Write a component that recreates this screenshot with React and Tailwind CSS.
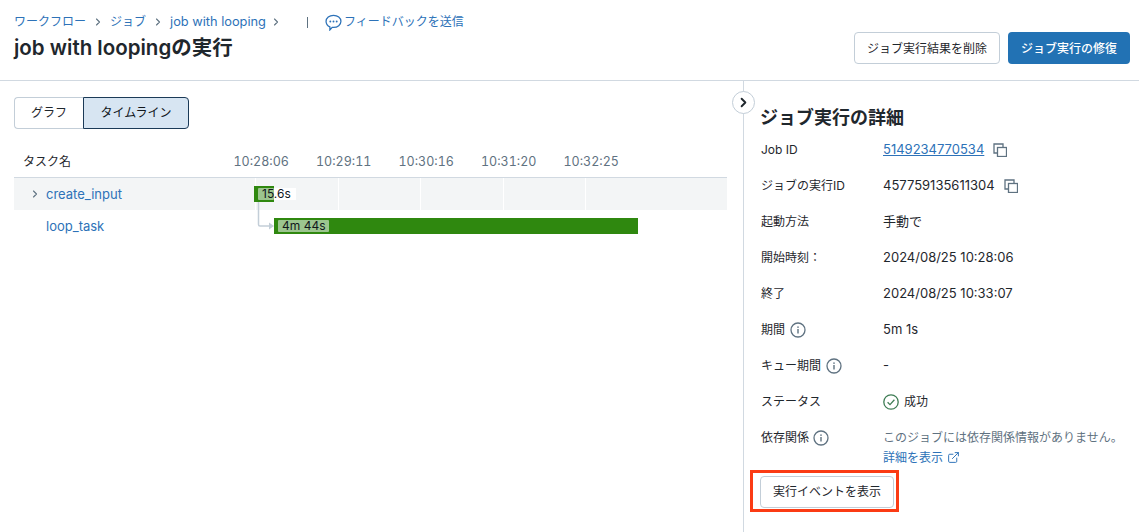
import { ChevronRight, ExternalLink } from 'lucide-react';

const FONT = "font-['Inter','Noto_Sans_CJK_JP',sans-serif]";
const TICKS = ['10:28:06', '10:29:11', '10:30:16', '10:31:20', '10:32:25'];

function CopyIcon() {
  return (
    <svg width="14" height="14" viewBox="0 0 14 14" fill="none" stroke="#5f7281" strokeWidth="1.3" className="shrink-0">
      <path d="M4 10H1V1h9v3" />
      <rect x="4.5" y="4.5" width="9" height="9" />
    </svg>
  );
}

function InfoIcon() {
  return (
    <svg width="16" height="16" viewBox="0 0 16 16" fill="none" className="shrink-0">
      <circle cx="8" cy="8" r="7" stroke="#5f7281" strokeWidth="1.3" />
      <rect x="7.3" y="7" width="1.4" height="4.5" fill="#5f7281" />
      <rect x="7.3" y="4.4" width="1.4" height="1.5" fill="#5f7281" />
    </svg>
  );
}

function SuccessIcon() {
  return (
    <svg width="16" height="16" viewBox="0 0 16 16" fill="none" className="shrink-0">
      <circle cx="8" cy="8" r="7.2" stroke="#3f7d55" strokeWidth="1.3" />
      <path d="M4.6 8.2l2.4 2.4 4.400-4.800" stroke="#3f7d55" strokeWidth="1.3" />
    </svg>
  );
}

function FeedbackIcon() {
  return (
    <svg width="17" height="17" viewBox="0 0 16 16" fill="none" className="shrink-0">
      <path d="M8 1.2c3.900 0 7 2.400 7 5.700s-3.100 5.700-7 5.700H6.800L4.600 15v-2.900C2.400 11.300 1 9.400 1 6.900 1 3.600 4.100 1.200 8 1.200z" stroke="#2d72b8" strokeWidth="1.200" />
      <circle cx="5" cy="7" r="0.9" fill="#2d72b8" />
      <circle cx="8" cy="7" r="0.9" fill="#2d72b8" />
      <circle cx="11" cy="7" r="0.9" fill="#2d72b8" />
    </svg>
  );
}

function DetailRow({ label, info, className, children }) {
  return (
    <div className={`flex items-center ${className}`}>
      <div className="w-[122px] shrink-0 flex items-center gap-[5px] text-[12px] text-[#1f272d]">
        {label}
        {info && <InfoIcon />}
      </div>
      <div className="flex items-center text-[13px] text-[#1f272d]">{children}</div>
    </div>
  );
}

function TimeGrid() {
  return (
    <div className="absolute inset-y-0 left-[241px] flex">
      {[0, 1, 2, 3, 4].map(i => (
        <div key={i} className="w-[82.500px] border-l border-white" />
      ))}
    </div>
  );
}

export default function App() {
  return (
    <div className={`${FONT} w-[1139px] h-[532px] overflow-hidden bg-white text-[#1f272d]`}>
      <header className="h-[81px] border-b border-[#d1d9e1] pl-[14px] pr-[9px] flex justify-between">
        <div>
          <div className="mt-[14px] h-[16px] flex items-center text-[12px] text-[#2d72b8]">
            <span>ワークフロー</span>
            <ChevronRight size={12} strokeWidth={2.200} className="text-[#5f7281] mx-[6px]" />
            <span>ジョブ</span>
            <ChevronRight size={12} strokeWidth={2.200} className="text-[#5f7281] mx-[6px]" />
            <span className="text-[12.800px]">job with looping</span>
            <ChevronRight size={12} strokeWidth={2.200} className="text-[#5f7281] mx-[4px]" />
            <span className="ml-[21px] mr-[17px] w-px h-[11px] bg-[#5f7281]" />
            <FeedbackIcon />
            <span className="ml-[2px]">フィードバックを送信</span>
          </div>
          <h1 className="mt-[4px] text-[20.500px] leading-[28px] font-semibold">job with loopingの実行</h1>
        </div>
        <div className="mt-[32px] flex gap-2 text-[12px] h-[32px]">
          <button className="w-[146px] pt-px rounded border border-[#c3ced8] bg-white">ジョブ実行結果を削除</button>
          <button className="w-[122px] pt-px rounded bg-[#2272b4] text-white font-medium">ジョブ実行の修復</button>
        </div>
      </header>

      <div className="flex h-[451px]">
        <main className="w-[743px] shrink-0 pl-[14px] pr-[16px] pt-[16px]">
          <div className="flex h-[32px] text-[12px]">
            <button className="w-[69px] rounded-l border border-r-0 border-[#c3ced8] bg-white">グラフ</button>
            <button className="w-[106px] rounded-r border border-[#1b3a57] bg-[#d7e5f2] text-[#11171c]">タイムライン</button>
          </div>

          <div className="mt-[17px] h-[32px] pt-[1px] border-b border-[#d1d9e1] flex items-center">
            <div className="w-[219.500px] pl-[9px] text-[12px]">タスク名</div>
            <div className="flex text-[12.500px] tabular-nums text-[#5f7281]">
              {TICKS.map(t => (
                <div key={t} className="w-[82.500px]">{t}</div>
              ))}
            </div>
          </div>

          <div className="relative h-[32px] bg-[#f3f5f6] flex items-center text-[13px] text-[#2d72b8]">
            <TimeGrid />
            <ChevronRight size={12} strokeWidth={2.200} className="relative ml-[15px] text-[#5f7281]" />
            <span className="relative ml-[5px] w-[208px] pt-[1px]">create_input</span>
            <div className="relative h-[16px] w-[20px] bg-[#2f880f] flex items-center">
              <span className="absolute left-[20px] top-[2px] h-[12px] w-[22px] bg-white" />
              <span className="absolute left-[4px] h-[12px] w-[38px] flex items-center text-[12px] text-[#11171c]">
                <span className="absolute left-0 w-[16px] h-[12px] rounded-[1px] bg-[#9cc58f]" />
                <span className="absolute left-[4px] top-[-1px] h-[14px] pr-[4px] leading-[14px]">15.6s</span>
              </span>
            </div>
          </div>

          <div className="relative h-[32px] flex items-center text-[13px] text-[#2d72b8]">
            <svg width="20" height="32" viewBox="0 0 20 32" fill="none" className="absolute left-[243px] top-[-8px]">
              <path d="M1.500 0V22.500Q1.500 24 3 24H13" stroke="#c3ced8" strokeWidth="1.500" />
              <path d="M12 20.500l5 3.500-5 3.500z" fill="#c3ced8" />
            </svg>
            <span className="ml-[32px] w-[228px] pt-[1px]">loop_task</span>
            <div className="relative h-[16px] w-[364px] bg-[#2f880f] flex items-center pl-[4px]">
              <span className="h-[12px] w-[51px] pl-[4px] rounded-[1px] bg-[#9cc58f] text-[12px] leading-[12px] text-[#11171c]">4m 44s</span>
            </div>
          </div>
        </main>

        <aside className="relative flex-1 border-l border-[#d1d9e1] pl-[17px]">
          <button className="absolute left-[-12px] top-[10px] w-[23px] h-[23px] rounded-full bg-white border border-[#c3ced8] flex items-center justify-center">
            <ChevronRight size={15} strokeWidth={3} className="text-[#1f272d]" />
          </button>

          <h2 className="mt-[24px] ml-[-1px] text-[18px] leading-[26px] font-semibold">ジョブ実行の詳細</h2>

          <DetailRow label="Job ID" className="mt-[6px] h-[26px]">
            <a className="underline text-[#2d72b8]">5149234770534</a>
            <span className="ml-[9px]"><CopyIcon /></span>
          </DetailRow>
          <DetailRow label="ジョブの実行ID" className="mt-[10px] h-[26px]">
            <span>457759135611304</span>
            <span className="ml-[9px]"><CopyIcon /></span>
          </DetailRow>
          <DetailRow label="起動方法" className="mt-[10px] h-[26px]">手動で</DetailRow>
          <DetailRow label="開始時刻：" className="mt-[10px] h-[26px]">2024/08/25 10:28:06</DetailRow>
          <DetailRow label="終了" className="mt-[10px] h-[26px]">2024/08/25 10:33:07</DetailRow>
          <DetailRow label="期間" info className="mt-[10px] h-[26px]">5m 1s</DetailRow>
          <DetailRow label="キュー期間" info className="mt-[10px] h-[26px]">-</DetailRow>
          <DetailRow label="ステータス" className="mt-[10px] h-[26px]">
            <SuccessIcon />
            <span className="ml-[5px] text-[12px]">成功</span>
          </DetailRow>

          <div className="mt-[13px] flex">
            <div className="w-[122px] shrink-0 h-[20px] flex items-center gap-[4px] text-[12px]">
              依存関係
              <InfoIcon />
            </div>
            <div className="text-[12px] leading-[20px] whitespace-nowrap">
              <div className="text-[#5f7281]">このジョブには依存関係情報がありません。</div>
              <div className="flex items-center text-[#2d72b8]">
                詳細を表示
                <ExternalLink size={13} strokeWidth={1.800} className="ml-[4px] mb-[2px]" />
              </div>
            </div>
          </div>

          <div className="mt-[2px] ml-[-11px] w-[149px] h-[42px] border-[3px] border-[#fb3b14] pl-[7px] pt-[3px]">
            <button className="w-[134px] h-[32px] rounded border border-[#c3ced8] bg-white text-[12px]">実行イベントを表示</button>
          </div>
        </aside>
      </div>
    </div>
  );
}
